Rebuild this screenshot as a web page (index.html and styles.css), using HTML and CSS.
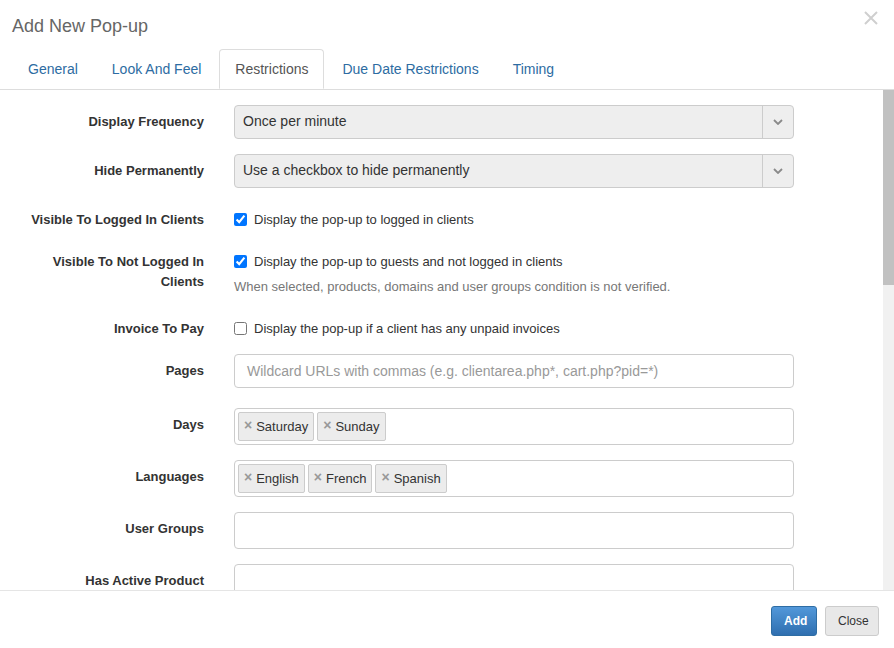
FILE: index.html
```html
<!DOCTYPE html>
<html>
<head>
<meta charset="utf-8">
<link rel="stylesheet" href="styles.css">
</head>
<body>
<div class="modal">
  <div class="modal-header">
    <h4 class="modal-title">Add New Pop-up</h4>
    <button class="close" type="button" aria-label="Close">
      <svg width="14" height="14" viewBox="0 0 14 14"><path d="M1 1L13 13M13 1L1 13" stroke="#cfcfcf" stroke-width="2" fill="none"/></svg>
    </button>
  </div>
  <ul class="tabs">
    <li><a>General</a></li>
    <li><a>Look And Feel</a></li>
    <li class="active"><a>Restrictions</a></li>
    <li><a>Due Date Restrictions</a></li>
    <li><a>Timing</a></li>
  </ul>
  <div class="modal-body">
    <div class="scroll-content">
      <form class="form">
        <div class="row">
          <label class="control-label">Display Frequency</label>
          <div class="select"><span class="select-value">Once per minute</span><span class="select-arrow"><svg width="10" height="6" viewBox="0 0 10 6"><path d="M1 1L5 5L9 1" stroke="#8a8a8a" stroke-width="1.8" fill="none"/></svg></span></div>
        </div>
        <div class="row">
          <label class="control-label">Hide Permanently</label>
          <div class="select"><span class="select-value">Use a checkbox to hide permanently</span><span class="select-arrow"><svg width="10" height="6" viewBox="0 0 10 6"><path d="M1 1L5 5L9 1" stroke="#8a8a8a" stroke-width="1.8" fill="none"/></svg></span></div>
        </div>
        <div class="row">
          <label class="control-label">Visible To Logged In Clients</label>
          <div class="check-col">
            <label class="checkbox"><input type="checkbox" checked> Display the pop-up to logged in clients</label>
          </div>
        </div>
        <div class="row">
          <label class="control-label">Visible To Not Logged In Clients</label>
          <div class="check-col">
            <label class="checkbox"><input type="checkbox" checked> Display the pop-up to guests and not logged in clients</label>
            <p class="help">When selected, products, domains and user groups condition is not verified.</p>
          </div>
        </div>
        <div class="row">
          <label class="control-label">Invoice To Pay</label>
          <div class="check-col">
            <label class="checkbox"><input type="checkbox"> Display the pop-up if a client has any unpaid invoices</label>
          </div>
        </div>
        <div class="row row-wide">
          <label class="control-label">Pages</label>
          <div class="input placeholder">Wildcard URLs with commas (e.g. clientarea.php*, cart.php?pid=*)</div>
        </div>
        <div class="row">
          <label class="control-label">Days</label>
          <div class="tagbox">
            <span class="tag"><span class="tag-x">×</span>Saturday</span>
            <span class="tag"><span class="tag-x">×</span>Sunday</span>
          </div>
        </div>
        <div class="row">
          <label class="control-label">Languages</label>
          <div class="tagbox">
            <span class="tag"><span class="tag-x">×</span>English</span>
            <span class="tag"><span class="tag-x">×</span>French</span>
            <span class="tag"><span class="tag-x">×</span>Spanish</span>
          </div>
        </div>
        <div class="row">
          <label class="control-label">User Groups</label>
          <div class="tagbox"></div>
        </div>
        <div class="row">
          <label class="control-label">Has Active Product</label>
          <div class="tagbox"></div>
        </div>
      </form>
    </div>
    <div class="scrollbar"><div class="thumb"></div></div>
  </div>
  <div class="modal-footer">
    <button class="btn btn-primary" type="button">Add</button>
    <button class="btn btn-default" type="button">Close</button>
  </div>
</div>
</body>
</html>
```
FILE: styles.css
```css
* { box-sizing: border-box; }
html, body { margin: 0; padding: 0; }
body {
  width: 894px;
  height: 648px;
  overflow: hidden;
  background: #fff;
  font-family: "Liberation Sans", Arial, sans-serif;
  font-size: 13px;
  color: #333;
}
.modal {
  display: flex;
  flex-direction: column;
  height: 648px;
}
.modal-header {
  display: flex;
  justify-content: space-between;
  align-items: flex-start;
  height: 49px;
  padding: 16px 16px 0 12px;
}
.modal-title {
  margin: 0;
  font-size: 18px;
  line-height: 20px;
  font-weight: normal;
  color: #666;
}
.close {
  border: 0;
  background: none;
  padding: 0;
  margin-top: -5px;
  cursor: pointer;
  line-height: 0;
}
.tabs {
  display: flex;
  list-style: none;
  margin: 0;
  padding: 0 0 0 12px;
  border-bottom: 1px solid #ddd;
  height: 41px;
}
.tabs li {
  margin-right: 2px;
  margin-bottom: -1px;
}
.tabs a {
  display: block;
  padding: 10px 15px;
  line-height: 18px;
  font-size: 14px;
  color: #2d6ca2;
  border: 1px solid transparent;
  border-radius: 4px 4px 0 0;
}
.tabs .active a {
  color: #555;
  background: #fff;
  border-color: #ddd #ddd #fff;
}
.modal-body {
  display: flex;
  height: 500px;
  overflow: hidden;
}
.scroll-content {
  flex: 1;
  overflow: hidden;
}
.scrollbar {
  width: 11px;
  background: #f1f1f1;
}
.thumb {
  height: 195px;
  background: #c1c1c1;
}
.form {
  padding: 15px 0 0 0;
}
.row {
  display: grid;
  grid-template-columns: 204px 560px;
  column-gap: 30px;
  margin-bottom: 15px;
}
.row-wide { margin-bottom: 20px; }
.control-label {
  text-align: right;
  font-weight: bold;
  font-size: 13px;
  line-height: 20px;
  padding: 7px 0 0 15px;
  color: #333;
}
.select {
  display: flex;
  height: 34px;
  border: 1px solid #ccc;
  border-radius: 4px;
  background: #eee;
  font-size: 14px;
  color: #333;
}
.select-value {
  flex: 1;
  padding: 0 8px;
  line-height: 31px;
}
.select-arrow {
  width: 31px;
  border-left: 1px solid #ccc;
  display: flex;
  align-items: center;
  justify-content: center;
}
.check-col {
  display: flex;
  flex-direction: column;
}
.checkbox {
  display: flex;
  align-items: center;
  gap: 7px;
  padding-top: 6px;
  min-height: 27px;
  line-height: 20px;
  font-size: 13px;
  align-self: flex-start;
}
.checkbox input {
  width: 13px;
  height: 13px;
  margin: 0;
  accent-color: #0075ff;
}
.help {
  margin: 6px 0 2px;
  line-height: 17px;
  font-size: 13px;
  color: #777;
}
.input {
  height: 34px;
  border: 1px solid #ccc;
  border-radius: 4px;
  padding: 0 12px;
  line-height: 32px;
  font-size: 14px;
}
.placeholder { color: #999; }
.tagbox {
  display: flex;
  flex-wrap: wrap;
  gap: 3px;
  min-height: 37px;
  border: 1px solid #ccc;
  border-radius: 4px;
  padding: 3px 4px 3px 3px;
}
.tag {
  display: flex;
  align-items: center;
  height: 29px;
  padding: 0 5px 0 5px;
  background: #ececec;
  border: 1px solid #ccc;
  border-radius: 2px;
  font-size: 13px;
  color: #333;
}
.tag-x {
  color: #999;
  font-weight: bold;
  font-size: 14px;
  margin-right: 4px;
  position: relative;
  top: -2px;
}
.modal-footer {
  flex: 1;
  display: flex;
  justify-content: flex-end;
  align-items: flex-start;
  gap: 8px;
  padding: 15px 15px 0;
  border-top: 1px solid #e5e5e5;
}
.btn {
  height: 30px;
  padding: 5px 12px;
  font-family: "Liberation Sans", Arial, sans-serif;
  font-size: 12px;
  line-height: 18px;
  border-radius: 3px;
  border: 1px solid #ccc;
}
.btn-primary {
  color: #fff;
  background: linear-gradient(#5298da, #2f6fb0);
  border-color: #2e6da4;
  font-weight: bold;
  width: 46px;
}
.btn-default {
  color: #333;
  background: #e8e8e8;
  border-color: #ccc;
  width: 54px;
}
```
